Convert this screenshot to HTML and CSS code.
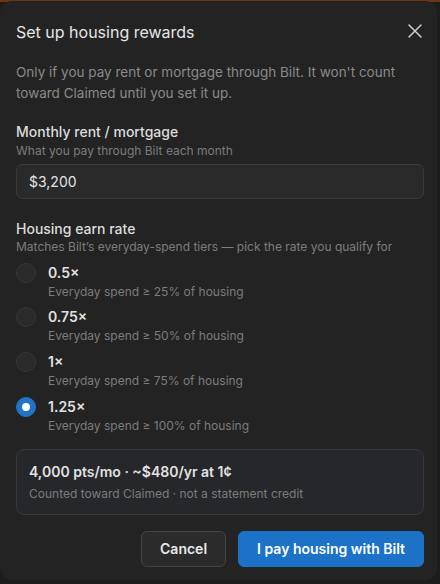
FILE: index.html
```html
<!DOCTYPE html>
<html lang="en">
<head>
<meta charset="utf-8">
<title>Set up housing rewards</title>
<link rel="stylesheet" href="styles.css">
</head>
<body>
<div class="dialog" role="dialog" aria-labelledby="dlg-title">
  <div class="header">
    <h2 id="dlg-title" class="title">Set up housing rewards</h2>
    <button class="close" aria-label="Close">
      <svg width="14" height="14" viewBox="0 0 14 14" fill="none" stroke="currentColor" stroke-width="1.5" stroke-linecap="round"><path d="M1 1L13 13M13 1L1 13"/></svg>
    </button>
  </div>
  <p class="desc">Only if you pay rent or mortgage through Bilt. It won't count toward Claimed until you set it up.</p>

  <div class="field">
    <div class="label">Monthly rent / mortgage</div>
    <div class="hint">What you pay through Bilt each month</div>
    <div class="input">$3,200</div>
  </div>

  <div class="field rates">
    <div class="label">Housing earn rate</div>
    <div class="hint">Matches Bilt’s everyday-spend tiers — pick the rate you qualify for</div>
    <div class="options">
      <div class="option">
        <span class="radio"></span>
        <div class="opt-text"><div class="opt-label">0.5×</div><div class="opt-sub">Everyday spend ≥ 25% of housing</div></div>
      </div>
      <div class="option">
        <span class="radio"></span>
        <div class="opt-text"><div class="opt-label">0.75×</div><div class="opt-sub">Everyday spend ≥ 50% of housing</div></div>
      </div>
      <div class="option">
        <span class="radio"></span>
        <div class="opt-text"><div class="opt-label">1×</div><div class="opt-sub">Everyday spend ≥ 75% of housing</div></div>
      </div>
      <div class="option">
        <span class="radio checked"></span>
        <div class="opt-text"><div class="opt-label">1.25×</div><div class="opt-sub">Everyday spend ≥ 100% of housing</div></div>
      </div>
    </div>
  </div>

  <div class="summary">
    <div class="sum-main">4,000 pts/mo · ~$480/yr at 1¢</div>
    <div class="sum-sub">Counted toward Claimed · not a statement credit</div>
  </div>

  <div class="actions">
    <button class="btn cancel">Cancel</button>
    <button class="btn primary">I pay housing with Bilt</button>
  </div>
</div>
</body>
</html>
```
FILE: styles.css
```css
* { box-sizing: border-box; }
html, body { margin: 0; padding: 0; }
body {
  width: 440px;
  height: 584px;
  overflow: hidden;
  background: linear-gradient(to bottom, #6e3414 0, #6e3414 2px, #1c1c1c 2px);
  font-family: Inter, "Noto Sans", sans-serif;
  color: #e4e4e4;
}
.dialog {
  width: 437px;
  height: 579px;
  margin-top: 1px;
  background: #232323;
  border-radius: 12px;
  padding: 20px 13px 13px 16px;
  display: flex;
  flex-direction: column;
}
.header {
  display: flex;
  align-items: center;
  justify-content: space-between;
  height: 22px;
}
.title {
  margin: 0;
  font-size: 16px;
  font-weight: 400;
  line-height: 22px;
  color: #e6e6e6;
}
.close {
  background: none;
  border: 0;
  padding: 0;
  width: 14px;
  height: 14px;
  margin-right: 2px;
  margin-bottom: 2px;
  color: #d0d0d0;
  display: flex;
}
.desc {
  margin: 19px 0 0;
  font-size: 13.5px;
  line-height: 21px;
  color: #8a8a8a;
}
.field { margin-top: 18px; }
.label {
  font-size: 14px;
  font-weight: 500;
  line-height: 20px;
  color: #dcdcdc;
}
.hint {
  font-size: 12px;
  line-height: 17px;
  color: #7c7c7c;
}
.input {
  margin-top: 5px;
  height: 35px;
  border: 1px solid #3a3a3a;
  border-radius: 6px;
  background: #2a2a2a;
  padding: 0 12px;
  display: flex;
  align-items: center;
  font-size: 14px;
  color: #e2e2e2;
}
.rates { margin-top: 20px; }
.rates .label { line-height: 19px; }
.options {
  margin-top: 7.5px;
  display: flex;
  flex-direction: column;
  gap: 7.7px;
}
.option {
  display: flex;
  align-items: flex-start;
  gap: 12px;
}
.radio {
  flex: none;
  width: 20px;
  height: 20px;
  border-radius: 50%;
  background: #2a2a2a;
  border: 1px solid #363636;
  display: flex;
  align-items: center;
  justify-content: center;
}
.radio.checked {
  background: #1f74c8;
  border-color: #1f74c8;
}
.radio.checked::after {
  content: "";
  width: 8px;
  height: 8px;
  border-radius: 50%;
  background: #ffffff;
}
.opt-label {
  font-size: 14px;
  font-weight: 600;
  line-height: 20px;
  color: #e0e0e0;
}
.opt-sub {
  font-size: 12px;
  line-height: 17px;
  color: #7c7c7c;
}
.summary {
  margin-top: 15px;
  border: 1px solid #37383c;
  border-radius: 8px;
  background: #26272a;
  padding: 12px 12px 12px;
}
.sum-main {
  font-size: 14px;
  font-weight: 600;
  line-height: 20px;
  color: #e2e2e2;
}
.sum-sub {
  margin-top: 3px;
  font-size: 12px;
  line-height: 17px;
  color: #7c7c7c;
}
.actions {
  margin-top: 16px;
  display: flex;
  justify-content: flex-end;
  gap: 12px;
}
.btn {
  height: 36px;
  border-radius: 6px;
  font-family: Inter, "Noto Sans", sans-serif;
  font-size: 14px;
  font-weight: 600;
  padding: 0 18px;
}
.cancel {
  background: #2b2b2b;
  border: 1px solid #444444;
  color: #e8e8e8;
}
.primary {
  background: #1b72c6;
  border: 1px solid #1b72c6;
  color: #ffffff;
}
```
